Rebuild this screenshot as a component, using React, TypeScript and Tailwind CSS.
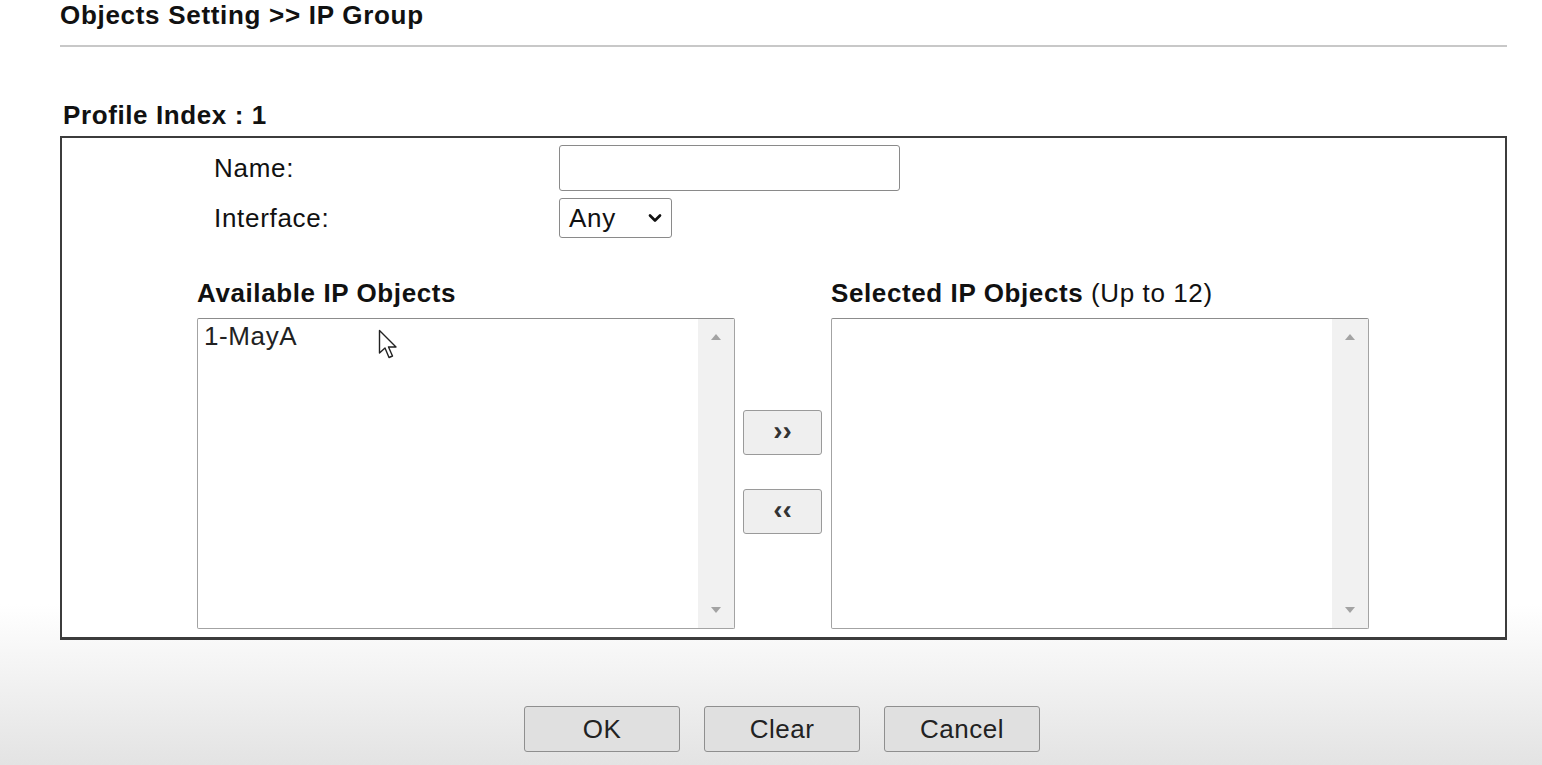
import { ChevronDown } from "lucide-react";

const ScrollList = ({ items }: { items: string[] }) => {
  return (
    <div className="flex h-[311px] w-[538px] rounded-[2px] border border-[#a3a3a3] border-t-[#8c8c8c] bg-white">
      <div className="flex-1 px-[6px] pt-[1px] text-[26px] leading-[32px] tracking-[0.6px] text-[#222]">
        {items.map((it) => (
          <div key={it}>{it}</div>
        ))}
      </div>
      <div className="flex w-[36px] flex-col items-center justify-between bg-[#f1f1f1] py-[14px]">
        <svg width="12" height="8" viewBox="0 0 12 8">
          <path d="M6 1 L11 7 L1 7 Z" fill="#a3a3a3" />
        </svg>
        <svg width="12" height="8" viewBox="0 0 12 8">
          <path d="M1 1 L11 1 L6 7 Z" fill="#a3a3a3" />
        </svg>
      </div>
    </div>
  );
};

const FormButton = ({ label }: { label: string }) => (
  <button className="h-[46px] w-[156px] rounded-[3px] border border-[#8f8f8f] bg-[#e0e0e0] text-[26px] tracking-[0.5px] text-[#222]">
    {label}
  </button>
);

const MoveButton = ({ glyph }: { glyph: string }) => (
  <button className="flex h-[45px] w-[79px] items-center justify-center rounded-[3px] border border-[#9a9a9a] bg-[#efefef] pb-[4px] text-[28px] font-bold text-[#333]">
    {glyph}
  </button>
);

export default function App() {
  return (
    <div className="relative min-h-[765px] w-[1542px] bg-[linear-gradient(to_bottom,#ffffff_0%,#ffffff_79%,#e3e3e3_100%)] font-['Liberation_Sans',Arial,sans-serif] text-[#111]">
      <div className="ml-[60px] w-[1447px]">
        <h1 className="h-[30px] text-[26px] leading-[30px] font-bold tracking-[0.7px]">Objects Setting &gt;&gt; IP Group</h1>
        <div className="mt-[15px] h-[2px] bg-[#c8c8c8]" />
        <div className="mt-[53px] pl-[3px] text-[26px] leading-[30px] font-bold tracking-[0.6px]">Profile Index : 1</div>
        <div className="mt-[6px] h-[504px] border-2 border-b-[3px] border-[#3c3c3c] bg-white">
          <div className="ml-[152px] mt-[7px] flex flex-col gap-[7px] text-[26px] tracking-[0.7px]">
            <div className="flex items-center">
              <span className="w-[345px]">Name:</span>
              <div className="h-[46px] w-[341px] rounded-[3px] border border-[#8a8a8a] bg-white" />
            </div>
            <div className="flex items-center">
              <span className="w-[345px]">Interface:</span>
              <div className="flex h-[40px] w-[113px] items-center justify-between rounded-[3px] border border-[#8a8a8a] bg-white pl-[9px] pr-[6px]">
                <span>Any</span>
                <ChevronDown size={20} strokeWidth={3.2} color="#111" />
              </div>
            </div>
          </div>
          <div className="ml-[135px] mt-[40px] flex">
            <div className="flex flex-col">
              <div className="h-[30px] text-[26px] leading-[30px] font-bold tracking-[0.6px]">Available IP Objects</div>
              <div className="mt-[10px]">
                <ScrollList items={["1-MayA"]} />
              </div>
            </div>
            <div className="flex w-[96px] flex-col items-start gap-[34px] pl-[8px] pt-[132px]">
              <MoveButton glyph="››" />
              <MoveButton glyph="‹‹" />
            </div>
            <div className="flex flex-col">
              <div className="h-[30px] text-[26px] leading-[30px] tracking-[0.6px]">
                <span className="font-bold">Selected IP Objects</span> (Up to 12)
              </div>
              <div className="mt-[10px]">
                <ScrollList items={[]} />
              </div>
            </div>
          </div>
        </div>
      </div>
      <div className="mt-[66px] flex justify-center gap-[24px] pl-[22px]">
        <FormButton label="OK" />
        <FormButton label="Clear" />
        <FormButton label="Cancel" />
      </div>
      <svg className="absolute left-[378px] top-[329px]" width="22" height="32" viewBox="0 0 22 32">
        <path
          d="M1.5 1.5 L1.5 24 L7 19 L11 28.5 L14.5 27 L10.5 18 L18 18 Z"
          fill="#fff"
          stroke="#222"
          strokeWidth="1.4"
          strokeLinejoin="round"
        />
      </svg>
    </div>
  );
}
